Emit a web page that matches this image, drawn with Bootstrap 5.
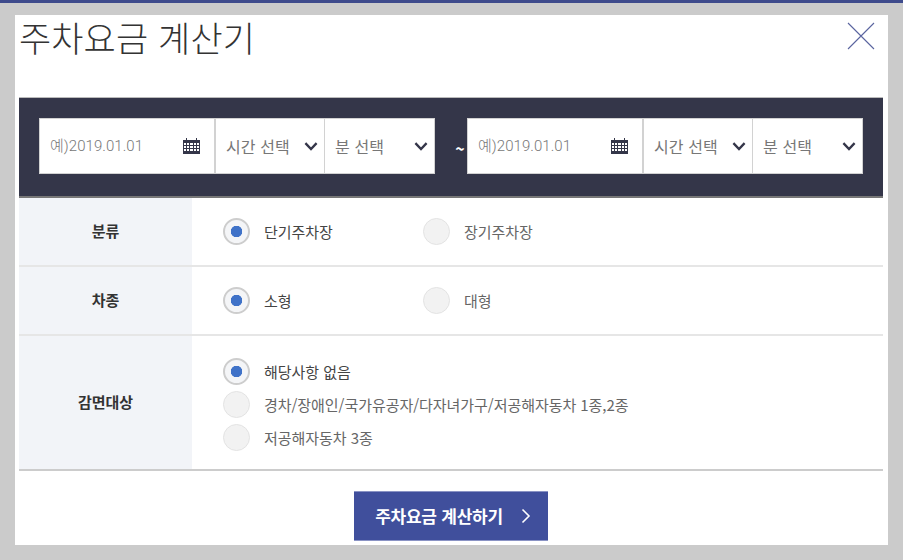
<!doctype html>
<html lang="ko">
<head>
<meta charset="utf-8">
<link href="https://cdn.jsdelivr.net/npm/bootstrap@5.3.0/dist/css/bootstrap.min.css" rel="stylesheet">
<style>
html,body{height:560px;overflow:hidden}
body{background:#cbcbcb;border-top:3px solid #3e4b8c;font-family:"Noto Sans CJK KR","Liberation Sans",sans-serif;color:#333;margin:0}
.sheet{margin:12px 15px 0;width:873px;height:530px;background:#fff;position:relative;padding:0 5px 0 4px}
.sheet-title{font-size:35px;font-weight:300;line-height:44px;height:82px;margin:0;color:#333;letter-spacing:.1px}
.close-x{position:absolute;top:6px;right:13px;width:28px;height:28px;padding:0;border:0;background:none}
.date-bar{height:101px;background:#343649;border-top:1px solid #bbb;border-bottom:2px solid #777;padding:20px 20px 0;align-items:flex-start}
.range{height:56px;background:#fff;border:1px solid #d2d2d2;width:396px;flex:none}
.tilde{width:32px;padding-left:18px;text-align:center;color:#fff;font-size:16px;font-weight:700;line-height:60px;flex:none}
.date-cell{width:176px;flex:none;padding:0 14px 0 10px;border-right:2px solid #d2d2d2;font-size:15px;color:#777;height:100%}
.date-cell span{font-family:"Roboto","Noto Sans CJK KR",sans-serif;font-weight:300;letter-spacing:.05px}
.pick{border:0;border-radius:0;height:100%;font-size:16px;color:#777;padding:0 24px 0 10px;box-shadow:none;letter-spacing:.1px;background-color:#fff;background-image:url("data:image/svg+xml,%3Csvg xmlns='http://www.w3.org/2000/svg' viewBox='0 0 12 9'%3E%3Cpath d='M1.2 1.6 6 6.6l4.8-5' fill='none' stroke='%23343649' stroke-width='2'/%3E%3C/svg%3E");background-size:14px 11px;background-position:right 6px center;background-repeat:no-repeat}
.pick-h{width:109px;flex:none;border-right:1px solid #d2d2d2}
.pick-m{flex:1 1 0;min-width:0;padding-left:10px;background-position:right 6px center}
.opt-row{border-bottom:2px solid #e6e6e6;height:69px}
.opt-row.tall{height:135px;border-bottom:2px solid #ccc}
.opt-head{width:173px;flex:none;background:#f2f4f8;font-weight:700;font-size:15px;color:#333}
.opt-body{padding-left:31px}
.opt{display:flex;align-items:center;gap:14px;font-size:15px;color:#666;margin:0;letter-spacing:-.05px;line-height:27px}
.opt.on{color:#444}
.opt-w{width:200px}
.dot{appearance:none;width:27px;height:27px;border-radius:50%;border:1px solid #e3e3e3;background:#f2f2f2;margin:0;flex:none}
.dot:checked{border:2px solid #cdcdcd;background:radial-gradient(circle,#3f72c8 0 5.5px,#f4f5f7 6px)}
.stack{display:flex;flex-direction:column;gap:6px;padding-top:4px}
.go{margin-top:20px;width:194px;height:50px;border-radius:0;background:#404f9c;border:0;border-top:1px solid #8a93c4;border-bottom:1px solid #8a93c4;color:#fff;font-weight:700;font-size:17px;letter-spacing:-.25px;gap:18px;padding:0 0 0 4px}
.go:hover{background:#404f9c;color:#fff}
</style>
</head>
<body>
<div class="sheet">
  <h1 class="sheet-title">주차요금 계산기</h1>
  <button class="close-x" type="button" aria-label="닫기"><svg width="28" height="28" viewBox="0 0 28 28"><path d="M1 1 27 27M27 1 1 27" stroke="#5a649f" stroke-width="1.1" fill="none"/></svg></button>
  <div class="date-bar d-flex">
    <div class="range d-flex">
      <div class="date-cell d-flex align-items-center justify-content-between"><span>예)2019.01.01</span>
        <svg width="17" height="16" viewBox="0 0 17 16"><path fill="#343649" d="M0 2h3V0h1v2h9V0h1v2h3v14H0zM1 5v2h2V5zm3 0v2h2V5zm3 0v2h3V5zm4 0v2h2V5zm3 0v2h2V5zM1 8v2h2V8zm3 0v2h2V8zm3 0v2h3V8zm4 0v2h2V8zm3 0v2h2V8zM1 11v2h2v-2zm3 0v2h2v-2zm3 0v2h3v-2zm4 0v2h2v-2zm3 0v2h2v-2z"/></svg></div>
      <select class="form-select pick pick-h"><option>시간 선택</option></select>
      <select class="form-select pick pick-m"><option>분 선택</option></select>
    </div>
    <div class="tilde">~</div>
    <div class="range d-flex">
      <div class="date-cell d-flex align-items-center justify-content-between"><span>예)2019.01.01</span>
        <svg width="17" height="16" viewBox="0 0 17 16"><path fill="#343649" d="M0 2h3V0h1v2h9V0h1v2h3v14H0zM1 5v2h2V5zm3 0v2h2V5zm3 0v2h3V5zm4 0v2h2V5zm3 0v2h2V5zM1 8v2h2V8zm3 0v2h2V8zm3 0v2h3V8zm4 0v2h2V8zm3 0v2h2V8zM1 11v2h2v-2zm3 0v2h2v-2zm3 0v2h3v-2zm4 0v2h2v-2zm3 0v2h2v-2z"/></svg></div>
      <select class="form-select pick pick-h"><option>시간 선택</option></select>
      <select class="form-select pick pick-m"><option>분 선택</option></select>
    </div>
  </div>
  <div class="opt-row d-flex">
    <div class="opt-head d-flex align-items-center justify-content-center">분류</div>
    <div class="opt-body d-flex align-items-center">
      <label class="opt on opt-w"><input class="dot" type="radio" name="a" checked>단기주차장</label>
      <label class="opt"><input class="dot" type="radio" name="a">장기주차장</label>
    </div>
  </div>
  <div class="opt-row d-flex">
    <div class="opt-head d-flex align-items-center justify-content-center">차종</div>
    <div class="opt-body d-flex align-items-center">
      <label class="opt on opt-w"><input class="dot" type="radio" name="b" checked>소형</label>
      <label class="opt"><input class="dot" type="radio" name="b">대형</label>
    </div>
  </div>
  <div class="opt-row tall d-flex">
    <div class="opt-head d-flex align-items-center justify-content-center">감면대상</div>
    <div class="opt-body d-flex align-items-center">
      <div class="stack">
        <label class="opt on"><input class="dot" type="radio" name="c" checked>해당사항 없음</label>
        <label class="opt"><input class="dot" type="radio" name="c">경차/장애인/국가유공자/다자녀가구/저공해자동차 1종,2종</label>
        <label class="opt"><input class="dot" type="radio" name="c">저공해자동차 3종</label>
      </div>
    </div>
  </div>
  <div class="d-flex justify-content-center">
    <button type="button" class="btn go d-flex align-items-center justify-content-center">주차요금 계산하기
      <svg width="10" height="16" viewBox="0 0 10 16"><path d="M1.5 1.5 8 8l-6.5 6.5" fill="none" stroke="#fff" stroke-width="1.6"/></svg></button>
  </div>
</div>
</body>
</html>
